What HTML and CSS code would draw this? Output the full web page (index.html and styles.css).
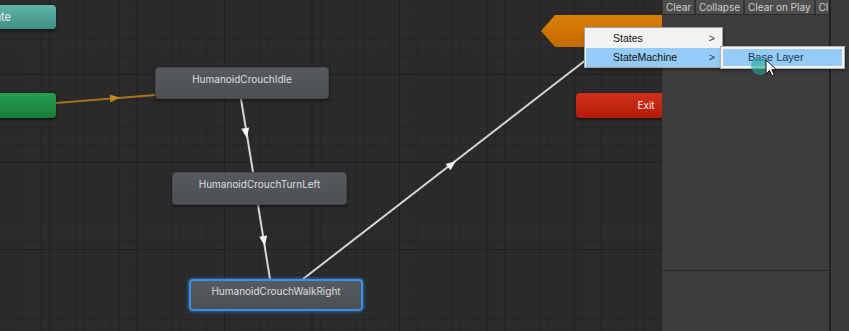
FILE: index.html
```html
<!DOCTYPE html>
<html lang="en">
<head>
    <meta charset="UTF-8">
    <meta name="viewport" content="width=device-width, initial-scale=1.0">
    <title>Animator - Base Layer</title>
    <link rel="stylesheet" href="styles.css">
</head>
<body>
    <div class="window">
        <div class="graph">
            <svg class="edges" width="662" height="331" viewBox="0 0 662 331">
                <!-- entry -> idle -->
                <line x1="56" y1="103" x2="155" y2="95" stroke="#a8711a" stroke-width="2"/>
                <polygon points="-5,-4 5,0 -5,4" fill="#c48418" transform="translate(115,98) rotate(-4.6)"/>
                <!-- idle -> turn left -->
                <line x1="241" y1="99" x2="253" y2="172" stroke="#d4d4d4" stroke-width="2"/>
                <polygon points="-5,-4 5,0 -5,4" fill="#f2f2f2" transform="translate(246,133) rotate(80.7)"/>
                <!-- turn left -> walk right -->
                <line x1="258" y1="205" x2="270" y2="279" stroke="#d4d4d4" stroke-width="2"/>
                <polygon points="-5,-4 5,0 -5,4" fill="#f2f2f2" transform="translate(264,241) rotate(80.7)"/>
                <!-- walk right -> up -->
                <line x1="303" y1="279" x2="600" y2="49" stroke="#d4d4d4" stroke-width="2"/>
                <polygon points="-5,-4 5,0 -5,4" fill="#f2f2f2" transform="translate(452,164) rotate(-37.7)"/>
            </svg>

            <div class="node node-any">Any State</div>
            <div class="node node-entry">Entry</div>
            <div class="node node-up">(Up) Base Layer</div>
            <div class="node node-exit">Exit</div>

            <div class="node state state-idle">HumanoidCrouchIdle</div>
            <div class="node state state-turn">HumanoidCrouchTurnLeft</div>
            <div class="node state state-walk selected">HumanoidCrouchWalkRight</div>
        </div>

        <div class="console">
            <div class="console-main">
                <div class="toolbar">
                    <span class="tool-btn">Clear</span>
                    <span class="tool-btn">Collapse</span>
                    <span class="tool-btn">Clear on Play</span>
                    <span class="tool-btn">Cl</span>
                </div>
                <div class="log-list"></div>
                <div class="log-detail"></div>
            </div>
            <div class="console-divider"></div>
            <div class="console-side"></div>
        </div>

        <div class="context-menu">
            <div class="menu-item">States<span class="chevron">&gt;</span></div>
            <div class="menu-item active">StateMachine<span class="chevron">&gt;</span></div>
        </div>
        <div class="submenu">
            <div class="menu-item active">Base Layer</div>
        </div>
        <div class="click-ring"></div>
        <svg class="cursor" width="14" height="20" viewBox="0 0 14 20">
            <path d="M1 1 L1 15 L4.5 11.5 L7 17 L9.2 16 L6.8 10.6 L11.5 10.6 Z" fill="#ffffff" stroke="#111" stroke-width="1"/>
        </svg>
    </div>
</body>
</html>
```

FILE: styles.css
```css
* {
    box-sizing: border-box;
}
body {
    margin: 0;
    background: #2b2b2b;
    font-family: 'Inter', 'Noto Sans', sans-serif;
}
.window {
    position: relative;
    display: flex;
    width: 849px;
    height: 331px;
    overflow: hidden;
}

/* graph canvas */
.graph {
    position: relative;
    width: 662px;
    height: 331px;
    overflow: hidden;
    background-color: #2b2b2b;
    background-image:
        linear-gradient(to right, #1f1f1f 1px, transparent 1px),
        linear-gradient(to bottom, #1f1f1f 1px, transparent 1px),
        linear-gradient(to right, #252525 1px, transparent 1px),
        linear-gradient(to bottom, #252525 1px, transparent 1px);
    background-size: 87.5px 87.5px, 87.5px 87.5px, 8.75px 8.75px, 8.75px 8.75px;
    background-position: 49px 74px;
}
.edges {
    position: absolute;
    left: 0;
    top: 0;
}
.node {
    position: absolute;
    width: 140px;
    height: 25px;
    border-radius: 4px;
    color: #f0f0f0;
    font-size: 10px;
    line-height: 24px;
    text-align: center;
    box-shadow: 0 2px 3px rgba(0, 0, 0, 0.45);
}
.node-any {
    left: -84px;
    top: 5px;
    height: 24px;
    font-size: 11px;
    background: linear-gradient(#5fb5a7, #3f8f85);
}
.node-entry {
    left: -84px;
    top: 93px;
    background: linear-gradient(#26a14f, #177a37);
}
.node-exit {
    left: 576px;
    top: 93px;
    background: linear-gradient(#d0301a, #b51b09);
}
.node-up {
    left: 541px;
    top: 15px;
    width: 190px;
    height: 32px;
    line-height: 32px;
    padding-left: 30px;
    border-radius: 0;
    background: linear-gradient(#d97f06, #c46a00);
    clip-path: polygon(0 50%, 14px 0, 100% 0, 100% 100%, 14px 100%);
}
.state {
    width: 174px;
    height: 32px;
    line-height: 23px;
    color: #dedede;
    background: linear-gradient(#565a5f, #4c5055);
    border: 1px solid #45484c;
}
.state-idle {
    left: 155px;
    top: 67px;
}
.state-turn {
    left: 172px;
    top: 172px;
    width: 175px;
    height: 33px;
}
.state-walk {
    left: 189px;
    top: 279px;
}
.selected {
    border: 2px solid #3b8fe6;
    line-height: 21px;
    box-shadow: 0 0 3px 1px rgba(47, 127, 208, 0.7);
}

/* console panel */
.console {
    flex: 1;
    display: flex;
    background: #3c3c3c;
}
.console-main {
    width: 167px;
    display: flex;
    flex-direction: column;
}
.toolbar {
    display: flex;
    gap: 2px;
    height: 15px;
    padding-left: 1px;
    background: #333;
    border-bottom: 1px solid #2a2a2a;
    overflow: hidden;
}
.tool-btn {
    flex-shrink: 0;
    height: 14px;
    padding: 0 3px;
    background: #4d4d4d;
    color: #cfcfcf;
    font-size: 10px;
    line-height: 14px;
}
.log-list {
    height: 256px;
    background: #3d3d3d;
    border-bottom: 1px solid #262626;
}
.log-detail {
    flex: 1;
    background: #3d3d3d;
}
.console-divider {
    width: 2px;
    background: #222;
}
.console-side {
    flex: 1;
    background: #3a3a3a;
}

/* context menu */
.context-menu {
    position: absolute;
    left: 584px;
    top: 27px;
    width: 139px;
    height: 41px;
    padding: 1px;
    background: #f2f2f2;
    border: 1px solid #a0a0a0;
    box-shadow: 1px 2px 3px rgba(0, 0, 0, 0.35);
    font-family: 'Liberation Sans', 'Noto Sans', sans-serif;
}
.menu-item {
    position: relative;
    height: 19px;
    padding-left: 27px;
    color: #111;
    font-size: 10.5px;
    line-height: 19px;
}
.menu-item.active {
    background: #95cbf7;
}
.chevron {
    position: absolute;
    right: 6px;
    top: 0;
    color: #333;
}
.submenu {
    position: absolute;
    left: 720px;
    top: 46px;
    width: 125px;
    height: 23px;
    padding: 2px;
    background: #f4f4f4;
    border: 1px solid #b0b0b0;
    box-shadow: 1px 2px 3px rgba(0, 0, 0, 0.35);
    font-family: 'Liberation Sans', 'Noto Sans', sans-serif;
}
.submenu .menu-item {
    height: 17px;
    padding-left: 25px;
    line-height: 17px;
    color: #1d3550;
    font-size: 11px;
}
.click-ring {
    position: absolute;
    left: 751px;
    top: 57px;
    width: 18px;
    height: 18px;
    border-radius: 50%;
    background: rgba(38, 170, 150, 0.6);
}
.cursor {
    position: absolute;
    left: 765px;
    top: 59px;
}
```
